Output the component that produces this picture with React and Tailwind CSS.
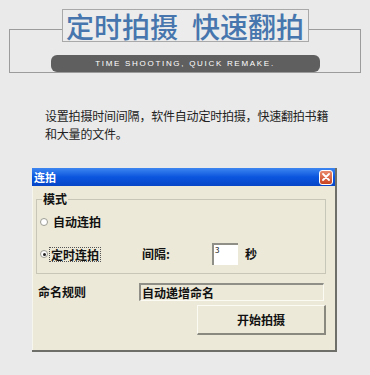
import React from "react";

/* Small XP-style radio */
function Radio({ checked }) {
  return (
    <span className="flex items-center justify-center w-[8px] h-[8px] rounded-full border border-[#9c9c94] bg-white shrink-0">
      {checked && <span className="w-[3px] h-[3px] rounded-full bg-[#222]" />}
    </span>
  );
}

const cjk = { fontFamily: '"Noto Sans CJK SC", "Noto Sans", sans-serif' };

export default function App() {
  return (
    <div className="w-[370px] h-[375px] bg-[#eaeaea] overflow-hidden flex flex-col" style={cjk}>
      {/* ── Header: title + subtitle bar ── */}
      <div className="mt-[29px] mx-[9px] h-[44px] border border-[#9c9c9c] flex flex-col items-center shrink-0">
        <div className="-mt-[21px] w-[247px] h-[40px] border border-[#a9a9a9] bg-[#ececec] flex items-center justify-center text-[28px] leading-none text-[#4676ad] font-medium">
          <span>定时拍摄</span>
          <span className="ml-[14px]">快速翻拍</span>
        </div>
        <div className="mt-[13px] w-[269px] h-[20px] rounded-[6px] bg-[#5f5f5f] flex items-center justify-center">
          <span
            className="text-white text-[8px] tracking-[1.7px] leading-none"
            style={{ fontFamily: '"Liberation Sans", Arial, sans-serif' }}
          >
            TIME SHOOTING, QUICK REMAKE.
          </span>
        </div>
      </div>

      {/* ── Description ── */}
      <p className="mt-[34px] ml-[45px] text-[12px] leading-[18px] text-[#222] whitespace-nowrap tracking-[-0.2px]">
        设置拍摄时间间隔，软件自动定时拍摄，快速翻拍书籍
        <br />
        和大量的文件。
      </p>

      {/* ── Dialog ── */}
      <div className="mt-[25px] ml-[32px] w-[305px] h-[184px] flex flex-col bg-[#ece9d8] border-r-2 border-b-2 border-[#6f6f6a] shrink-0">
        {/* Title bar */}
        <div className="h-[18px] flex items-center justify-between pl-[2px] pr-[2px] bg-gradient-to-b from-[#3d86f0] via-[#0a55df] to-[#0746c6]">
          <span className="text-white text-[11px] font-bold leading-none">连拍</span>
          <span className="w-[14px] h-[15px] rounded-[3px] border border-white bg-gradient-to-b from-[#e98a6c] to-[#c8431f] flex items-center justify-center">
            <svg width="8" height="8" viewBox="0 0 8 8">
              <path d="M1 1 L7 7 M7 1 L1 7" stroke="white" strokeWidth="1.8" strokeLinecap="round" />
            </svg>
          </span>
        </div>

        {/* Body */}
        <div className="flex-1 flex flex-col border-l border-[#f6f5ee] text-[12px] font-bold text-[#111]">
          {/* Group box 模式 */}
          <div className="mt-[13px] ml-[3px] w-[290px] h-[75px] border border-[#c8c6b6] flex flex-col">
            <span className="-mt-[8px] ml-[5px] px-[1px] self-start h-[14px] leading-[14px] bg-[#ece9d8]">模式</span>

            <div className="mt-[9px] h-[14px] flex items-center pl-[3px]">
              <Radio />
              <span className="ml-[5px] leading-[14px]">自动连拍</span>
            </div>

            <div className="mt-[17px] h-[16px] flex items-center pl-[3px]">
              <Radio checked />
              <span className="ml-[1px] px-[1px] h-[15px] leading-[14px] border border-dotted border-[#555]">定时连拍</span>
              <span className="ml-[41px]">间隔:</span>
              <span className="ml-[42px] w-[26px] h-[22px] bg-white border-t-2 border-l-2 border-[#8f8e87] text-[8px] font-normal leading-[10px] pl-[1px]">
                3
              </span>
              <span className="ml-[7px]">秒</span>
            </div>
          </div>

          {/* 命名规则 row */}
          <div className="mt-[9px] h-[18px] flex items-center">
            <span className="ml-[5px] w-[101px]">命名规则</span>
            <span className="w-[185px] h-[18px] border-t-2 border-l-2 border-[#8f8e87] border-b border-r border-b-[#fbfaf3] border-r-[#fbfaf3] pl-[1px] leading-[15px]">
              自动递增命名
            </span>
          </div>

          {/* Button */}
          <div className="mt-[4px] ml-[164px] w-[129px] h-[30px] flex items-center justify-center border-t border-l border-[#fbfaf3] border-b-2 border-r-2 border-b-[#8a897f] border-r-[#8a897f]">
            开始拍摄
          </div>
        </div>
      </div>
    </div>
  );
}
